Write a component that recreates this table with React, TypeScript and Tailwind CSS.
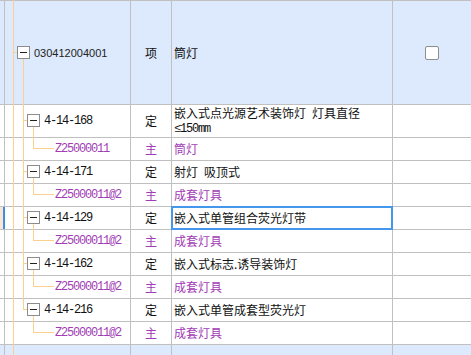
import React from 'react';

type Row = {
  kind: 'p' | 'c';
  code: string;
  type: string;
  name: React.ReactNode;
  tall?: boolean;
  selected?: boolean;
  last?: boolean;
  afterLast?: boolean;
};

const ROWS: Row[] = [
  {
    kind: 'p',
    code: '4-14-168',
    type: '定',
    tall: true,
    name: (
      <span className="leading-[14px]">
        嵌入式点光源艺术装饰灯{'\u2002'}灯具直径
        <br />
        <span className="font-['Liberation_Mono',monospace] tracking-[-1.2px]">≤150mm</span>
      </span>
    ),
  },
  { kind: 'c', code: 'Z25000011', type: '主', name: '筒灯' },
  { kind: 'p', code: '4-14-171', type: '定', name: '射灯\u2002吸顶式' },
  { kind: 'c', code: 'Z25000011@2', type: '主', name: '成套灯具' },
  { kind: 'p', code: '4-14-129', type: '定', name: '嵌入式单管组合荧光灯带', selected: true },
  { kind: 'c', code: 'Z25000011@2', type: '主', name: '成套灯具' },
  { kind: 'p', code: '4-14-162', type: '定', name: '嵌入式标志.诱导装饰灯' },
  { kind: 'c', code: 'Z25000011@2', type: '主', name: '成套灯具' },
  { kind: 'p', code: '4-14-216', type: '定', name: '嵌入式单管成套型荧光灯', last: true },
  { kind: 'c', code: 'Z25000011@2', type: '主', name: '成套灯具', afterLast: true },
];

const MinusBox = ({ className }: { className: string }) => (
  <div className={`absolute w-[13px] h-[13px] border border-[#8c8c8c] bg-white flex items-center justify-center ${className}`}>
    <div className="w-[7px] h-px bg-[#222]" />
  </div>
);

const Stub = ({ selected }: { selected?: boolean }) =>
  selected ? (
    <div className="flex w-[5px] shrink-0">
      <div className="w-[3px] bg-[#fde6cf]" />
      <div className="w-[2px] bg-[#3b8ee8]" />
    </div>
  ) : (
    <div className="w-[5px] shrink-0 border-r border-[#c0c0c0]" />
  );

function TreeCell({ row }: { row: Row }) {
  const c = row.tall ? 15 : 10;
  const isChild = row.kind === 'c';
  return (
    <div
      className={`relative w-[126px] shrink-0 border-r border-[#c0c0c0] flex items-center font-['Liberation_Mono',monospace] text-[12px] tracking-[-1.2px] ${
        isChild ? 'pl-[50px] text-[#a23cb5]' : 'pl-[39px] text-[#111]'
      }`}
    >
      <div className="absolute left-[8px] top-0 -bottom-px w-px bg-[#fccf8e]" />
      {!row.afterLast &&
        (row.last ? (
          <div className="absolute left-[18px] top-0 w-px bg-[#fccf8e]" style={{ height: c + 1 }} />
        ) : (
          <div className="absolute left-[18px] top-0 -bottom-px w-px bg-[#fccf8e]" />
        ))}
      {isChild ? (
        <>
          <div className="absolute left-[28px] top-0 w-px bg-[#fccf8e]" style={{ height: c + 1 }} />
          <div className="absolute left-[29px] w-[20px] h-px bg-[#fccf8e]" style={{ top: c }} />
        </>
      ) : (
        <>
          <div className="absolute left-[19px] w-[3px] h-px bg-[#fccf8e]" style={{ top: c }} />
          <MinusBox className={row.tall ? 'left-[22px] top-[9px]' : 'left-[22px] top-[4px]'} />
          <div className="absolute left-[28px] -bottom-px w-px bg-[#fccf8e]" style={{ top: c + 7 }} />
        </>
      )}
      <span className="relative">{row.code}</span>
    </div>
  );
}

function DataRow({ row }: { row: Row }) {
  const color = row.kind === 'c' ? 'text-[#a23cb5]' : 'text-[#111]';
  return (
    <div className={`flex shrink-0 border-b border-[#c0c0c0] bg-white ${row.tall ? 'h-[33px]' : 'h-[23px]'}`}>
      <Stub selected={row.selected} />
      <TreeCell row={row} />
      <div className={`w-[41px] shrink-0 border-r border-[#c0c0c0] flex items-center justify-center ${color}`}>
        {row.type}
      </div>
      <div className={`relative w-[221px] shrink-0 border-r border-[#c0c0c0] flex items-center pl-[2px] ${color}`}>
        {row.name}
        {row.selected && <div className="absolute -left-px -top-px -right-px -bottom-px border-2 border-[#4597ee]" />}
      </div>
      <div className="flex-1" />
    </div>
  );
}

export default function App() {
  return (
    <div className="w-[471px] h-[355px] overflow-hidden bg-white flex flex-col font-['Noto_Sans_CJK_SC',sans-serif] text-[12px] leading-[14px] text-[#111]">
      <div className="flex shrink-0 h-[105px] border-t border-b border-[#c0c0c0] bg-[#dde9fc]">
        <div className="w-[5px] shrink-0 border-r border-[#c0c0c0]" />
        <div className="relative w-[126px] shrink-0 border-r border-[#c0c0c0] flex items-center pl-[29px] font-['Liberation_Sans',sans-serif] text-[11px] text-[#222]">
          <div className="absolute left-[8px] -top-px -bottom-px w-px bg-[#fccf8e]" />
          <div className="absolute left-[9px] top-[51px] w-[3px] h-px bg-[#fccf8e]" />
          <MinusBox className="left-[12px] top-[45px]" />
          <div className="absolute left-[18px] top-[58px] -bottom-px w-px bg-[#fccf8e]" />
          <span className="relative">030412004001</span>
        </div>
        <div className="w-[41px] shrink-0 border-r border-[#c0c0c0] flex items-center justify-center">项</div>
        <div className="w-[221px] shrink-0 border-r border-[#c0c0c0] flex items-center pl-[2px]">筒灯</div>
        <div className="flex-1 flex items-center justify-center">
          <div className="w-[14px] h-[14px] rounded-[2px] border border-[#8e8e8e] bg-white" />
        </div>
      </div>
      {ROWS.map((r, i) => (
        <DataRow key={i} row={r} />
      ))}
      <div className="flex flex-1 bg-[#dde9fc]">
        <div className="w-[5px] shrink-0 border-r border-[#c0c0c0]" />
        <div className="relative w-[126px] shrink-0 border-r border-[#c0c0c0]">
          <div className="absolute left-[8px] top-0 bottom-0 w-px bg-[#fccf8e]" />
        </div>
        <div className="w-[41px] shrink-0 border-r border-[#c0c0c0]" />
        <div className="w-[221px] shrink-0 border-r border-[#c0c0c0]" />
        <div className="flex-1" />
      </div>
    </div>
  );
}
